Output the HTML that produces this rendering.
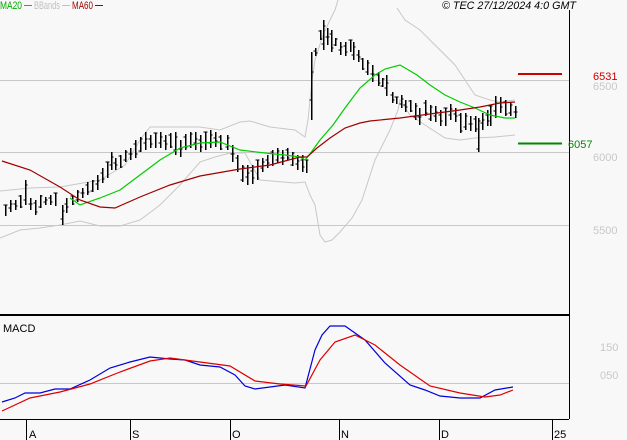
<!DOCTYPE html><html><head><meta charset="utf-8"><style>
html,body{margin:0;padding:0;background:#f8f8f8;width:627px;height:440px;overflow:hidden}
svg{display:block}
text{font-family:"Liberation Sans",sans-serif;font-size:11px}
</style></head><body>
<svg id="s" width="627" height="440" viewBox="0 0 627 440" xmlns="http://www.w3.org/2000/svg" shape-rendering="crispEdges">
<rect width="627" height="440" fill="#f8f8f8"/>
<g stroke="#c8c8c8" stroke-width="1">
<line x1="0" y1="80.5" x2="569" y2="80.5"/><line x1="0" y1="152.5" x2="569" y2="152.5"/><line x1="0" y1="225.5" x2="569" y2="225.5"/><line x1="0" y1="383.5" x2="569" y2="383.5"/>
</g>
<g fill="none" stroke="#c8c8c8" stroke-width="1" shape-rendering="auto">
<polyline points="0,191 30,188 60,187 100,180 125,165 140,140 150,127 180,127 200,127 220,130 240,122 250,121 270,127 295,130 305,137 308,120 312,80 315,60 323,35 330,20 335,10 338,0"/>
<polyline points="397,8 405,20 420,30 435,45 455,65 465,80 475,95 490,100 500,102 515,100"/>
<polyline points="0,238 20,230 40,228 60,225 80,221 100,226 120,226 140,220 160,205 180,185 200,162 215,157 230,153 245,153 260,180 295,183 305,182 310,195 315,205 320,235 325,242 332,240 340,232 352,218 362,200 375,160 390,130 398,110 400,100 410,115 425,125 445,138 460,140 475,138 495,137 515,135"/>
</g>
<g id="bars" stroke="#000" stroke-width="1.5"></g>
<g fill="none" stroke-width="1.2" shape-rendering="auto">
<polyline stroke="#00cc00" points="70,198 80,205 100,198 120,190 140,175 160,160 180,148 200,143 220,142 240,150 265,153 285,155 300,157 305,160 310,154 320,140 333,125 345,108 360,88 375,75 385,69 400,65 417,75 430,85 445,95 460,102 475,108 490,115 505,118 515,118"/>
<polyline stroke="#a00000" points="2,161 30,170 60,187 80,200 100,207 115,208 140,197 170,185 200,176 240,169 270,165 300,157 307,157 317,148 330,138 345,128 360,123 370,121 400,118 430,114 460,110 480,107 500,103 515,102"/>
<polyline stroke="#0000dd" points="2,402 15,398 25,393 40,393 55,389 70,389 90,380 110,368 130,362 150,357 170,359 185,360 200,365 220,367 235,375 245,386 255,389 270,387 285,385 305,388 315,350 322,335 330,326 345,326 365,340 385,363 410,385 425,390 440,396 460,398 480,398 495,390 513,387"/>
<polyline stroke="#dd0000" points="2,411 30,398 60,392 90,384 120,372 150,361 170,358 200,362 230,366 255,381 280,384 306,386 320,360 335,342 355,335 375,345 400,365 430,386 460,393 485,397 500,395 513,390"/>
</g>
<line x1="518" y1="74" x2="562" y2="74" stroke="#cc0000" stroke-width="2"/>
<line x1="518" y1="143.5" x2="562" y2="143.5" stroke="#008800" stroke-width="2"/>
<line x1="569.5" y1="10" x2="569.5" y2="419" stroke="#000"/>
<line x1="0" y1="315" x2="569" y2="315" stroke="#000" stroke-width="2"/>
<line x1="0" y1="419.5" x2="569" y2="419.5" stroke="#000"/>
<g stroke="#000"><line x1="26.5" y1="419" x2="26.5" y2="440"/><line x1="130.5" y1="419" x2="130.5" y2="440"/><line x1="230.5" y1="419" x2="230.5" y2="440"/><line x1="339.5" y1="419" x2="339.5" y2="440"/><line x1="439.5" y1="419" x2="439.5" y2="440"/><line x1="552.5" y1="419" x2="552.5" y2="440"/></g>
<g fill="#000"><text x="29" y="438">A</text><text x="132" y="438">S</text><text x="232" y="438">O</text><text x="341" y="438">N</text><text x="441" y="438">D</text><text x="554" y="438">25</text></g>
<text x="3" y="332" font-size="10">MACD</text>
<text x="0" y="9" fill="#00aa00" font-size="10" textLength="22" lengthAdjust="spacingAndGlyphs">MA20</text>
<line x1="24" y1="5.5" x2="32" y2="5.5" stroke="#00cc00"/>
<text x="34" y="9" fill="#c0c0c0" font-size="10" textLength="26" lengthAdjust="spacingAndGlyphs">BBands</text>
<line x1="62" y1="5.5" x2="70" y2="5.5" stroke="#c0c0c0"/>
<text x="72" y="9" fill="#990000" font-size="10" textLength="21" lengthAdjust="spacingAndGlyphs">MA60</text>
<line x1="95" y1="5.5" x2="103" y2="5.5" stroke="#990000"/>
<text x="442" y="9" font-size="10" font-style="italic" textLength="134" lengthAdjust="spacingAndGlyphs">© TEC 27/12/2024 4:0 GMT</text>
<text x="593" y="80" fill="#cc0000">6531</text>
<text x="593" y="90" fill="#c8c8c8">6500</text>
<text x="568" y="148" fill="#008800">6057</text>
<text x="593" y="161" fill="#c8c8c8">6000</text>
<text x="593" y="234" fill="#c8c8c8">5500</text>
<text x="600" y="351" fill="#c8c8c8">150</text>
<text x="600" y="379" fill="#c8c8c8">050</text>
</svg>
<script>
var B=[[5,205,216],[10,200,212],[15,200,210],[20,195,208],[25,180,205],[30,198,210],[35,200,215],[40,195,208],[45,197,205],[50,195,205],[55,193,206],[62,205,225],[66,198,213],[72,195,205],[77,190,202],[82,188,198],[87,182,195],[92,180,192],[97,175,190],[102,168,183],[107,162,178],[111,152,170],[115,158,170],[120,155,168],[125,150,162],[130,148,160],[135,140,158],[140,137,152],[145,132,150],[150,135,148],[155,133,148],[160,132,148],[165,135,150],[170,133,148],[175,132,155],[180,140,157],[185,134,150],[190,132,148],[195,132,150],[200,135,152],[205,132,150],[210,130,148],[215,132,147],[220,135,150],[227,135,150],[232,145,162],[237,155,172],[242,165,182],[247,165,185],[252,165,184],[257,160,180],[262,158,172],[267,155,168],[272,150,166],[277,148,163],[282,150,165],[287,148,160],[292,152,166],[297,155,170],[302,155,172],[306,160,173],[311,52,120],[315,48,56],[320,30,40],[323,20,50],[327,28,45],[331,30,52],[335,38,46],[340,42,55],[345,42,56],[350,40,52],[353,42,60],[358,50,62],[362,58,70],[367,60,75],[372,65,82],[378,72,86],[382,78,87],[386,75,96],[392,92,103],[396,97,104],[401,95,108],[405,100,112],[410,100,112],[415,103,120],[419,108,125],[425,100,116],[430,105,121],[435,106,122],[440,110,126],[445,108,126],[450,104,120],[455,108,122],[460,113,133],[465,113,130],[470,116,131],[475,116,132],[478,118,152],[482,113,130],[487,110,126],[490,106,126],[495,96,118],[500,97,113],[505,100,116],[510,102,116],[515,106,118]];
var g=document.getElementById('bars'),h='';
B.forEach(function(b,i){var x=b[0]+0.5,o=b[1]+(b[2]-b[1])*((i*37%10)/10),c=b[1]+(b[2]-b[1])*((i*53%10)/10);
h+='<line x1="'+x+'" y1="'+b[1]+'" x2="'+x+'" y2="'+b[2]+'"/><line x1="'+(x-2)+'" y1="'+Math.round(o)+'" x2="'+x+'" y2="'+Math.round(o)+'" stroke-width="1"/><line x1="'+x+'" y1="'+Math.round(c)+'" x2="'+(x+2)+'" y2="'+Math.round(c)+'" stroke-width="1"/>';});
g.innerHTML=h;
</script>
</body></html>
